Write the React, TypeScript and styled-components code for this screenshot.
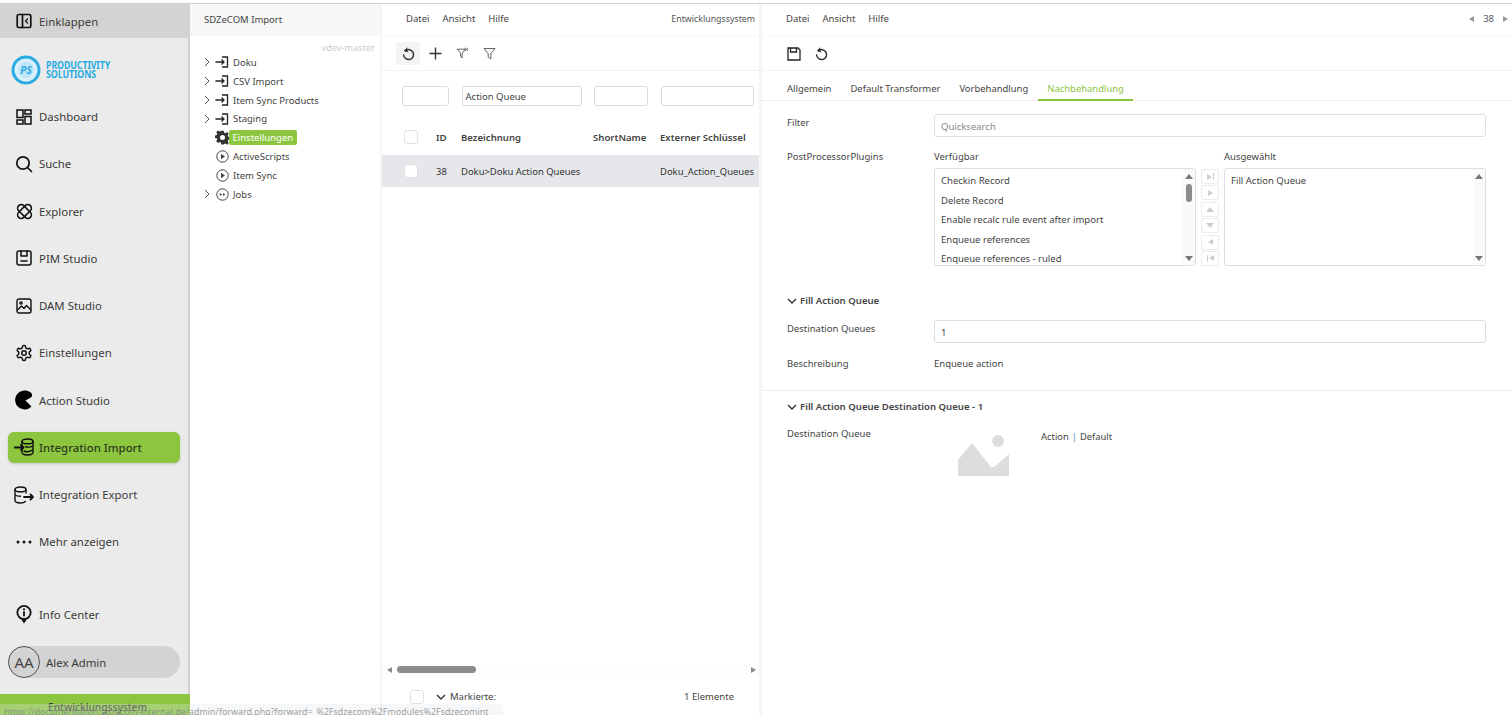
import React from "react";
import styled, { createGlobalStyle } from "styled-components";

const Global = createGlobalStyle`
  html, body { margin: 0; padding: 0; height: 100%; background: #fff; overflow: hidden; }
  body { font-family: "Noto Sans", "Open Sans", sans-serif; color: #3d3d3d; }
  * { box-sizing: border-box; }
`;

const GREEN = "#8cc63f";

const Page = styled.div`
  position: relative;
  width: 1512px; height: 715px; overflow: hidden;
  display: flex; flex-direction: column;
  padding-top: 3px;
`;
const TopLine = styled.div`height: 1px; background: #cfcfcf; flex: none;`;
const Body = styled.div`flex: 1; min-height: 0; display: flex;`;

/* Sidebar */
const Sidebar = styled.aside`
  width: 190px; flex: none; background: #ebebeb; border-right: 2px solid #d0d0d0;
  display: flex; flex-direction: column;
`;
const Collapse = styled.div`
  height: 34px; margin-right: -2px; background: #d3d3d3; display: flex; align-items: center; gap: 5px;
  padding-left: 14px; font-size: 11.4px; color: #3a3a3a; flex: none;
`;
const Logo = styled.div`
  height: 63px; flex: none; display: flex; align-items: center; gap: 5px; padding: 1px 0 0 11px;
`;
const LogoText = styled.div`
  font-size: 10px; line-height: 9px; color: #29abe2; font-weight: 700;
  letter-spacing: -0.1px; transform: scaleX(0.88); transform-origin: left center;
`;
const Nav = styled.nav`display: flex; flex-direction: column; flex: none;`;
const NavItem = styled.div<{ $active?: boolean }>`
  height: 31.25px; margin: 0 8px 16px; padding-left: 6px; display: flex; align-items: center; gap: 5px;
  border-radius: 6px; font-size: 11.4px; color: #3a3a3a;
  ${(p) => p.$active && `background: ${GREEN}; font-weight: 500; color: #2e3a1f; box-shadow: 0 1px 3px rgba(0,0,0,.15);`}
`;
const NavIcon = styled.span`
  width: 20px; height: 20px; flex: none; display: flex; align-items: center; justify-content: center; color: #111;
`;
const Spacer = styled.div`flex: 1;`;
const UserPill = styled.div`
  height: 32px; margin: 0 8px 16px; background: #d3d3d3; border-radius: 16px; display: flex; align-items: center; gap: 6px;
  font-size: 11.4px; color: #3a3a3a; padding-bottom: 0;
`;
const Avatar = styled.div`
  width: 32px; height: 32px; border-radius: 50%; border: 1px solid #555; display: flex; align-items: center; justify-content: center;
  font-size: 15px; color: #444; flex: none;
`;
const EnvBar = styled.div`
  height: 21px; margin-right: -2px; flex: none; background: ${GREEN}; font-size: 10.2px; line-height: 27px; color: #3a3f33; font-weight: 500; padding-left: 48px;
  position: relative; z-index: 2;
`;
const StatusTip = styled.div`
  position: absolute; left: 0; bottom: 0; width: 503px; height: 11px; background: rgba(225,228,235,.3); z-index: 3;
  border-top-right-radius: 3px; font-size: 8.9px; line-height: 15px; color: rgba(120,125,125,.75); white-space: nowrap; overflow: hidden; padding-left: 4px;
`;

/* Tree */
const TreePanel = styled.section`
  width: 192px; flex: none; border-right: 2px solid #f5f5f5; display: flex; flex-direction: column;
`;
const TreeHead = styled.div`
  height: 32px; flex: none; background: #f7f7f7; padding: 0 0 2px 14px; display: flex; align-items: center; font-size: 9.5px; color: #444;
`;
const Version = styled.div`
  text-align: right; padding: 5px 5px 0 0; font-size: 9.2px; line-height: 13px; color: #ccc; height: 17px;
`;
const Tree = styled.div`display: flex; flex-direction: column;`;
const TreeRow = styled.div`
  height: 18.85px; display: flex; align-items: center; font-size: 9.5px; color: #444; padding-left: 14px;
`;
const Chevron = styled.span`width: 10px; flex: none; display: flex; align-items: center; justify-content: flex-start;`;
const TreeIcon = styled.span`width: 16px; height: 14px; flex: none; margin-right: 3px; display: flex; align-items: center; justify-content: center;`;
const TreeSel = styled.span`
  background: ${GREEN}; color: #fff; border-radius: 2px; padding: 0 3.5px; height: 15px; line-height: 15px; margin-left: -4px;
`;

/* List + detail panels */
const ListPanel = styled.section`
  width: 380px; flex: none; border-right: 3px solid #f5f5f5; display: flex; flex-direction: column; position: relative;
`;
const DetailPanel = styled.section`flex: 1; min-width: 0; display: flex; flex-direction: column;`;
const MenuBar = styled.div`
  height: 32px; flex: none; display: flex; align-items: center; gap: 13px; padding: 0 4px 2px 24px;
  font-size: 9.5px; color: #444; border-bottom: 1px solid #f7f7f7;
`;
const MenuEnd = styled.div`margin-left: auto; display: flex; align-items: center; gap: 4px; font-size: 8.8px; color: #555;`;
const PagerNum = styled.span`font-size: 9.5px; color: #556; margin: 0 5px;`;
const Toolbar = styled.div<{ $pad: number }>`
  height: 35px; flex: none; display: flex; align-items: center; padding: 1px 0 0 ${(p) => p.$pad}px; gap: 3px; border-bottom: 1px solid #f3f3f3;
`;
const Tool = styled.span<{ $on?: boolean }>`
  width: 24px; height: 23px; border-radius: 3px; display: flex; align-items: center; justify-content: center;
  color: #333; ${(p) => p.$on && "background: #f4f4f4;"}
`;
const FilterRow = styled.div`
  display: grid; grid-template-columns: 47px 120px 54px 93px; column-gap: 12.5px; padding: 15px 0 0 20px; height: 48px; flex: none;
`;
const FilterBox = styled.div`
  height: 20px; border: 1px solid #dcdcdc; border-radius: 3px; font-size: 9.5px; line-height: 20px; padding-left: 3px; color: #444;
`;
const Row = styled.div<{ $sel?: boolean }>`
  height: 32px; flex: none; display: grid; grid-template-columns: 54px 25px 132px 67px auto; align-items: center; font-size: 9.45px; color: #333;
  ${(p) => p.$sel && "background: #e6e7ea;"}
`;
const Head = styled(Row)`font-weight: 600; color: #444; height: 36px; font-size: 9.6px;`;
const Check = styled.span`
  justify-self: center; width: 14px; height: 14px; border: 1px solid #e0e0e0; border-radius: 3px; background: #fff; display: block; margin-left: 4px;
`;
const Fill = styled.div`flex: 1;`;
const HScroll = styled.div`
  height: 11px; flex: none; display: flex; align-items: center; background: #fdfdfd; padding: 0 3px 0 5px; margin-bottom: 15px;
`;
const HThumb = styled.div`width: 79px; height: 7px; border-radius: 4px; background: #8c8c8c; margin-left: 5px;`;
const HGap = styled.div`flex: 1;`;
const Tri = styled.span<{ $dir: "l" | "r" | "u" | "d"; $c?: string }>`
  display: inline-block; width: 0; height: 0; flex: none;
  ${({ $dir, $c = "#8c8c8c" }) =>
    $dir === "l" ? `border-top:3.5px solid transparent;border-bottom:3.5px solid transparent;border-right:5px solid ${$c};`
    : $dir === "r" ? `border-top:3.5px solid transparent;border-bottom:3.5px solid transparent;border-left:5px solid ${$c};`
    : $dir === "u" ? `border-left:4px solid transparent;border-right:4px solid transparent;border-bottom:5px solid ${$c};`
    : `border-left:4px solid transparent;border-right:4px solid transparent;border-top:5px solid ${$c};`}
`;
const ListFoot = styled.div`
  height: 25px; flex: none; display: flex; align-items: flex-start; padding: 0 25px 0 28px; font-size: 9.5px; color: #444;
`;
const FootCheck = styled.span`width: 14px; height: 14px; border: 1px solid #e0e0e0; border-radius: 3px; margin: 0 12px 0 0;`;
const FootCount = styled.span`margin-left: auto; font-size: 9.5px;`;
const FootLabel = styled.span`display: flex; align-items: center; gap: 4px; line-height: 14px;`;

/* Detail */
const Tabs = styled.div`height: 30px; flex: none; display: flex; padding-left: 15.5px; border-bottom: 1px solid #eee;`;
const TabItem = styled.div<{ $on?: boolean }>`
  padding: 0 9.5px; font-size: 9.45px; line-height: 35px; color: ${(p) => (p.$on ? GREEN : "#444")}; height: 30px; white-space: nowrap;
  ${(p) => p.$on && `border-bottom: 2px solid ${GREEN};`}
`;
const Form = styled.div<{ $top: number }>`padding: ${(p) => p.$top}px 26px 0 25px; display: flex; flex-direction: column;`;
const FormRow = styled.div<{ $h?: number }>`
  display: grid; grid-template-columns: 147px 1fr; min-height: ${(p) => p.$h || 0}px; font-size: 9.5px; color: #444;
`;
const Label = styled.div`line-height: 18px; font-size: 9.5px;`;
const Input = styled.div<{ $ph?: boolean }>`
  height: 23px; border: 1px solid #dedede; border-radius: 3px; padding-left: 6px; line-height: 23px; font-size: 9.5px; color: ${(p) => (p.$ph ? "#888" : "#444")};
`;
const Picker = styled.div`display: grid; grid-template-columns: 262px 28px 262px; grid-template-rows: 20px 98px;`;
const PickHead = styled.div`font-size: 9.5px; line-height: 13px; padding-top: 2px;`;
const PickGap = styled.div``;
const PickBox = styled.div`
  border: 1px solid #dedede; border-radius: 3px; display: flex; overflow: hidden; box-shadow: 0 0 1px rgba(0,0,0,.05);
`;
const PickList = styled.div`flex: 1; padding: 2px 0 0 6px; display: flex; flex-direction: column;`;
const PickItem = styled.div`height: 19.6px; line-height: 19.6px; font-size: 9.5px; flex: none; white-space: nowrap;`;
const VScroll = styled.div`
  width: 12px; flex: none; background: #fafafa; display: flex; flex-direction: column; align-items: center; padding: 5px 0 4px;
`;
const VThumb = styled.div`width: 6px; height: 18px; border-radius: 3px; background: #8c8c8c; margin-top: 5px;`;
const VSpace = styled.div`flex: 1;`;
const Moves = styled.div`display: flex; flex-direction: column; justify-content: space-between; align-items: center; padding: 1px 0 0;`;
const Move = styled.div`
  width: 18px; height: 15px; border: 1px solid #ececec; border-radius: 2px; display: flex; align-items: center; justify-content: center; gap: 1px;
`;
const Bar = styled.span`width: 1px; height: 7px; background: #ccc;`;
const SecTitle = styled.div<{ $top: number }>`
  display: flex; align-items: center; gap: 3px; font-size: 9.6px; font-weight: 600; color: #444; padding-left: 25px; margin-top: ${(p) => p.$top}px;
`;
const Divider = styled.div`height: 1px; background: #ececec; flex: none; margin-top: 9px;`;
const Placeholder = styled.div`display: flex; align-items: flex-start; gap: 32px; padding-left: 24px; padding-top: 9px;`;
const ActionText = styled.div`font-size: 9.4px; line-height: 14px; margin-top: -4px;`;
const Sep = styled.span`color: #4a90c2; margin: 0 3px;`;

const S = { fill: "none", stroke: "currentColor", strokeWidth: 1.7, strokeLinecap: "round" as const, strokeLinejoin: "round" as const };

const Ic = {
  collapse: (
    <svg width="16" height="16" viewBox="0 0 16 16" {...S}><rect x="1.2" y="1.5" width="13.6" height="13" rx="1.5" /><path d="M6.5 1.5v13" /><path d="M11.5 6 9.500 8l2 2" strokeWidth="1.2" /></svg>
  ),
  dash: (
    <svg width="16" height="16" viewBox="0 0 16 16" fill="none" stroke="currentColor" strokeWidth="1.5"><rect x="1" y="1" width="6" height="7.5" /><rect x="9" y="1" width="6" height="4" /><rect x="1" y="11" width="6" height="4" /><rect x="9" y="7.5" width="6" height="7.5" /></svg>
  ),
  search: (
    <svg width="18" height="18" viewBox="0 0 18 18" {...S}><circle cx="8" cy="8" r="6.2" /><path d="m13 13 3.5 3.5" /></svg>
  ),
  explorer: (
    <svg width="17" height="17" viewBox="0 0 19 19" fill="none" stroke="currentColor" strokeWidth="1.8"><rect x="5.500" y="0.300" width="8" height="18.400" rx="4" transform="rotate(45 9.500 9.500)" /><rect x="5.500" y="0.300" width="8" height="18.400" rx="4" transform="rotate(-45 9.500 9.500)" /></svg>
  ),
  pim: (
    <svg width="16" height="16" viewBox="0 0 16 16" {...S} strokeWidth="1.5"><rect x="1" y="1" width="14" height="14" rx="2" /><path d="M5 1v5h6V1M5 11h6" /></svg>
  ),
  dam: (
    <svg width="16" height="16" viewBox="0 0 16 16" {...S} strokeWidth="1.4"><rect x="1" y="1" width="14" height="14" rx="2" /><circle cx="5" cy="5" r="1.1" /><path d="m1.5 12 4-4 2.5 2.5 2.5-3 4 4" /></svg>
  ),
  gear: (
    <svg width="18" height="18" viewBox="0 0 24 24" {...S} strokeWidth="2"><path d="M12.22 2h-.44a2 2 0 0 0-2 2v.18a2 2 0 0 1-1 1.73l-.43.25a2 2 0 0 1-2 0l-.15-.08a2 2 0 0 0-2.73.73l-.22.38a2 2 0 0 0 .73 2.73l.15.1a2 2 0 0 1 1 1.72v.51a2 2 0 0 1-1 1.74l-.15.09a2 2 0 0 0-.73 2.73l.22.38a2 2 0 0 0 2.73.73l.15-.08a2 2 0 0 1 2 0l.43.25a2 2 0 0 1 1 1.73V20a2 2 0 0 0 2 2h.44a2 2 0 0 0 2-2v-.18a2 2 0 0 1 1-1.73l.43-.25a2 2 0 0 1 2 0l.15.08a2 2 0 0 0 2.73-.73l.22-.39a2 2 0 0 0-.73-2.73l-.15-.08a2 2 0 0 1-1-1.74v-.5a2 2 0 0 1 1-1.74l.15-.09a2 2 0 0 0 .73-2.73l-.22-.38a2 2 0 0 0-2.73-.73l-.15.08a2 2 0 0 1-2 0l-.43-.25a2 2 0 0 1-1-1.73V4a2 2 0 0 0-2-2z" /><circle cx="12" cy="12" r="3" /></svg>
  ),
  pac: (
    <svg width="18" height="20" viewBox="0 0 18 20"><path d="M14.500 1.800A9.500 9.500 0 1 0 16.500 16.500L10.500 10.600 15.800 7.400A2.600 2.600 0 0 0 17 4.500 3.500 3.500 0 0 0 14.500 1.800z" fill="#000" /></svg>
  ),
  dbIn: (
    <svg width="20" height="18" viewBox="0 0 20 18" {...S} strokeWidth="1.4"><ellipse cx="13.500" cy="3.400" rx="5.500" ry="2.400" /><path d="M8 3.400V7M8 12v2.600c0 1.300 2.500 2.400 5.500 2.400s5.500-1.100 5.500-2.400V3.400M11.500 8.800c2 .4 5.500.3 7.500-1M10 13.200c3 .8 7 .3 9-1.400" /><path d="M0.700 9.500H9.500M7 7l2.500 2.500L7 12" strokeWidth="1.800" /></svg>
  ),
  dbOut: (
    <svg width="20" height="18" viewBox="0 0 20 18" {...S} strokeWidth="1.4"><ellipse cx="6.500" cy="3.400" rx="5.500" ry="2.400" /><path d="M1 3.400v11.200C1 15.900 3.500 17 6.500 17c2 0 4-.6 5-1.500M1 9c1.500 1 4 1.300 5.500 1.300M12 3.400V7" /><path d="M10 11h9M16.500 8.500 19 11l-2.500 2.500" strokeWidth="1.800" /></svg>
  ),
  dots: (
    <svg width="16" height="4" viewBox="0 0 16 4"><circle cx="2" cy="2" r="1.500" fill="#111" /><circle cx="8" cy="2" r="1.500" fill="#111" /><circle cx="14" cy="2" r="1.500" fill="#111" /></svg>
  ),
  info: (
    <svg width="16" height="20" viewBox="0 0 16 20"><path d="M8 19.500 5.300 15.500A7.500 7.500 0 1 1 10.700 15.500z" fill="#111" /><circle cx="8" cy="8.500" r="5.700" fill="#ebebeb" /><rect x="7.100" y="7.300" width="1.800" height="5" fill="#111" /><circle cx="8" cy="5.300" r="1.100" fill="#111" /></svg>
  ),
  reload: (
    <svg width="13" height="14" viewBox="0 0 13 14" {...S} strokeWidth="1.500"><path d="M3.300 3.800A5 5 0 1 1 1.600 8" /><path d="M5 1 2.500 3.800l3.300 1" fill="currentColor" strokeWidth="1" /></svg>
  ),
  plus: (
    <svg width="13" height="13" viewBox="0 0 13 13" stroke="currentColor" strokeWidth="1.400"><path d="M6.500 0.500v12M0.500 6.500h12" /></svg>
  ),
  funnelX: (
    <svg width="13" height="13" viewBox="0 0 13 13" fill="none" stroke="#555" strokeWidth="0.900" strokeLinejoin="round"><path d="M1 2.200h8.200l-3 3.800v5L4.500 9.500V6z" /><path d="m8.500 1 3.500 3M12 1 8.500 4" /></svg>
  ),
  funnel: (
    <svg width="13" height="13" viewBox="0 0 13 13" fill="none" stroke="#555" strokeWidth="0.900" strokeLinejoin="round"><path d="M1 1.500h11L7.800 6.800V12L5.200 10V6.800z" /></svg>
  ),
  save: (
    <svg width="14" height="14" viewBox="0 0 14 14" fill="none" stroke="#222" strokeWidth="1.300"><path d="M1 1h10l2 2v10H1z" /><path d="M3.500 1v4h6V1" /></svg>
  ),
  chevR: (
    <svg width="6" height="10" viewBox="0 0 6 10" fill="none" stroke="#555" strokeWidth="1"><path d="m1 1 4 4-4 4" /></svg>
  ),
  chevD: (
    <svg width="10" height="6" viewBox="0 0 10 6" fill="none" stroke="#333" strokeWidth="1.400"><path d="m1 1 4 4 4-4" /></svg>
  ),
  enter: (
    <svg width="14" height="12" viewBox="0 0 14 12" fill="none" stroke="#222" strokeWidth="1.300"><path d="M7 1h5.500v10H7" /><path d="M0.500 6H9M6.500 3.500 9 6 6.500 8.500" /></svg>
  ),
  play: (
    <svg width="13" height="13" viewBox="0 0 13 13"><circle cx="6.500" cy="6.500" r="5.700" fill="none" stroke="#444" strokeWidth="1" /><path d="M5 3.800v5.400l4-2.700z" fill="#444" /></svg>
  ),
  ffwd: (
    <svg width="13" height="13" viewBox="0 0 13 13"><circle cx="6.500" cy="6.500" r="5.700" fill="none" stroke="#444" strokeWidth="1" /><path d="M3.800 5v3l2.300-1.500zM7 5v3l2.300-1.500z" fill="#444" /></svg>
  ),
  cog: (
    <svg width="15" height="15" viewBox="0 0 24 24"><path fill="#333" fillRule="evenodd" d="M10 1h4l.6 3.200 2 .8L19.300 3.200l2.800 2.800-1.800 2.700.8 2 3.200.6v4l-3.200.6-.8 2 1.800 2.700-2.800 2.800-2.700-1.800-2 .8L14 23h-4l-.6-3.200-2-.8-2.700 1.800L1.900 18l1.800-2.700-.8-2L-.3 12.700v-4l3.200-.6.8-2L1.900 3.400 4.700.6l2.700 1.800 2-.8zM12 8a4 4 0 1 0 0 8 4 4 0 0 0 0-8z" /></svg>
  ),
};

const PsLogo = () => (
  <svg width="30" height="30" viewBox="0 0 30 30">
    <circle cx="15" cy="15" r="14.500" fill="#29abe2" />
    <circle cx="15" cy="15" r="11.500" fill="#d9f0fb" />
    <circle cx="15" cy="15" r="8" fill="#bfe6f8" />
    <text x="15" y="18.500" textAnchor="middle" fontFamily="Noto Sans" fontStyle="italic" fontWeight="700" fontSize="10" fill="#29abe2">PS</text>
  </svg>
);

const navTop: [string, React.ReactNode, boolean?][] = [
  ["Dashboard", Ic.dash], ["Suche", Ic.search], ["Explorer", Ic.explorer], ["PIM Studio", Ic.pim], ["DAM Studio", Ic.dam],
  ["Einstellungen", Ic.gear], ["Action Studio", Ic.pac], ["Integration Import", Ic.dbIn, true], ["Integration Export", Ic.dbOut], ["Mehr anzeigen", Ic.dots],
];

const tree: [string, React.ReactNode, boolean, boolean?][] = [
  ["Doku", Ic.enter, true], ["CSV Import", Ic.enter, true], ["Item Sync Products", Ic.enter, true], ["Staging", Ic.enter, true],
  ["Einstellungen", Ic.cog, false, true], ["ActiveScripts", Ic.play, false], ["Item Sync", Ic.play, false], ["Jobs", Ic.ffwd, true],
];

const available = ["Checkin Record", "Delete Record", "Enable recalc rule event after import", "Enqueue references", "Enqueue references - ruled"];

export default function App() {
  return (
    <Page>
      <Global />
      <TopLine />
      <Body>
        <Sidebar>
          <Collapse><NavIcon>{Ic.collapse}</NavIcon>Einklappen</Collapse>
          <Logo><PsLogo /><LogoText>PRODUCTIVITY<br />SOLUTIONS</LogoText></Logo>
          <Nav>
            {navTop.map(([t, i, a]) => (
              <NavItem key={t} $active={a}><NavIcon>{i}</NavIcon>{t}</NavItem>
            ))}
          </Nav>
          <Spacer />
          <NavItem><NavIcon>{Ic.info}</NavIcon>Info Center</NavItem>
          <UserPill><Avatar>AA</Avatar>Alex Admin</UserPill>
          <EnvBar>Entwicklungssystem</EnvBar>
        </Sidebar>

        <TreePanel>
          <TreeHead>SDZeCOM Import</TreeHead>
          <Version>vdev-master</Version>
          <Tree>
            {tree.map(([t, i, c, s]) => (
              <TreeRow key={t}>
                <Chevron>{c && Ic.chevR}</Chevron>
                <TreeIcon>{i}</TreeIcon>
                {s ? <TreeSel>{t}</TreeSel> : t}
              </TreeRow>
            ))}
          </Tree>
        </TreePanel>

        <ListPanel>
          <MenuBar>
            <span>Datei</span><span>Ansicht</span><span>Hilfe</span>
            <MenuEnd>Entwicklungssystem</MenuEnd>
          </MenuBar>
          <Toolbar $pad={14}>
            <Tool $on>{Ic.reload}</Tool><Tool>{Ic.plus}</Tool><Tool>{Ic.funnelX}</Tool><Tool>{Ic.funnel}</Tool>
          </Toolbar>
          <FilterRow>
            <FilterBox /><FilterBox>Action Queue</FilterBox><FilterBox /><FilterBox />
          </FilterRow>
          <Head><Check /><span>ID</span><span>Bezeichnung</span><span>ShortName</span><span>Externer Schlüssel</span></Head>
          <Row $sel><Check /><span>38</span><span>Doku&gt;Doku Action Queues</span><span /><span>Doku_Action_Queues</span></Row>
          <Fill />
          <HScroll>
            <Tri $dir="l" /><HThumb /><HGap /><Tri $dir="r" />
          </HScroll>
          <ListFoot>
            <FootCheck />
            <FootLabel>{Ic.chevD}Markierte:</FootLabel>
            <FootCount>1 Elemente</FootCount>
          </ListFoot>
        </ListPanel>

        <DetailPanel>
          <MenuBar>
            <span>Datei</span><span>Ansicht</span><span>Hilfe</span>
            <MenuEnd><Tri $dir="l" $c="#999" /><PagerNum>38</PagerNum><Tri $dir="r" $c="#999" /></MenuEnd>
          </MenuBar>
          <Toolbar $pad={20}><Tool>{Ic.save}</Tool><Tool>{Ic.reload}</Tool></Toolbar>
          <Tabs>
            <TabItem>Allgemein</TabItem>
            <TabItem>Default Transformer</TabItem>
            <TabItem>Vorbehandlung</TabItem>
            <TabItem $on>Nachbehandlung</TabItem>
          </Tabs>
          <Form $top={13}>
            <FormRow $h={34}><Label>Filter</Label><Input $ph>Quicksearch</Input></FormRow>
            <FormRow>
              <Label>PostProcessorPlugins</Label>
              <Picker>
                <PickHead>Verfügbar</PickHead><PickGap /><PickHead>Ausgewählt</PickHead>
                <PickBox>
                  <PickList>{available.map((a) => <PickItem key={a}>{a}</PickItem>)}</PickList>
                  <VScroll><Tri $dir="u" $c="#777" /><VThumb /><VSpace /><Tri $dir="d" $c="#777" /></VScroll>
                </PickBox>
                <Moves>
                  <Move><Tri $dir="r" $c="#ccc" /><Bar /></Move>
                  <Move><Tri $dir="r" $c="#ccc" /></Move>
                  <Move><Tri $dir="u" $c="#ccc" /></Move>
                  <Move><Tri $dir="d" $c="#ccc" /></Move>
                  <Move><Tri $dir="l" $c="#ccc" /></Move>
                  <Move><Bar /><Tri $dir="l" $c="#ccc" /></Move>
                </Moves>
                <PickBox>
                  <PickList><PickItem>Fill Action Queue</PickItem></PickList>
                  <VScroll><Tri $dir="u" $c="#777" /><VSpace /><Tri $dir="d" $c="#777" /></VScroll>
                </PickBox>
              </Picker>
            </FormRow>
          </Form>
          <SecTitle $top={28}>{Ic.chevD}Fill Action Queue</SecTitle>
          <Form $top={13}>
            <FormRow $h={35}><Label>Destination Queues</Label><Input>1</Input></FormRow>
            <FormRow $h={26}><Label>Beschreibung</Label><Label>Enqueue action</Label></FormRow>
          </Form>
          <Divider />
          <SecTitle $top={9}>{Ic.chevD}Fill Action Queue Destination Queue - 1</SecTitle>
          <Form $top={12}>
            <FormRow>
              <Label>Destination Queue</Label>
              <Placeholder>
                <svg width="51" height="42" viewBox="0 0 51 42"><circle cx="40" cy="7" r="6" fill="#ddd" /><path d="M0 42V26L14 9l19 24 3 0 15-13v22z" fill="#ddd" /></svg>
                <ActionText>Action<Sep>|</Sep>Default</ActionText>
              </Placeholder>
            </FormRow>
          </Form>
        </DetailPanel>
      </Body>
      <StatusTip>https://documentation.sdzecom-internal.de/admin/forward.php?forward=_%2Fsdzecom%2Fmodules%2Fsdzecomint</StatusTip>
    </Page>
  );
}
